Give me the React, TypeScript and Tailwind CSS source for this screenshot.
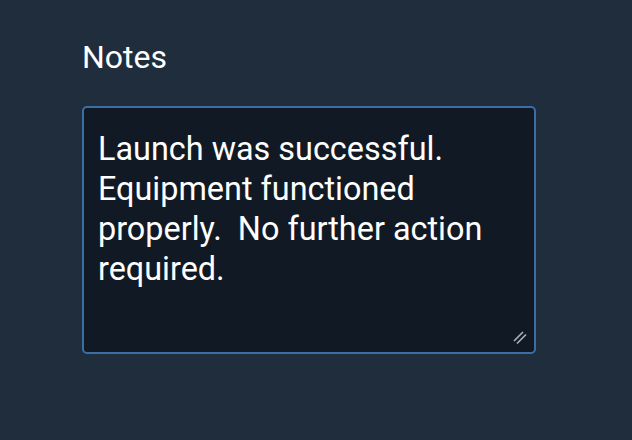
import React from 'react';

export default function App() {
  return (
    <div className="min-h-[440px] w-full bg-[#1f2d3d] pl-[82px] pt-[39px] font-['Roboto','Liberation_Sans',sans-serif]">
      <label htmlFor="notes" className="block text-[32px] leading-[36px] text-white">
        Notes
      </label>
      <div className="relative mt-[31px] w-[454px]">
        <textarea
          id="notes"
          defaultValue={'Launch was successful.  Equipment functioned properly.  No further action required.'}
          className="block h-[248px] w-full resize-none rounded-[5px] border-2 border-[#3b6ea5] bg-[#111a24] px-[14px] pt-[21px] pb-[12px] font-['Roboto','Liberation_Sans',sans-serif] text-[32.4px] leading-[40px] text-white outline-none"
        />
        {/* resize grip */}
        <svg className="pointer-events-none absolute right-[9px] bottom-[10px] h-[14px] w-[14px]" viewBox="0 0 14 14">
          <path d="M1.5 10.5 L9.5 2.5 M4.5 13 L12.5 5" stroke="#aab0b7" strokeWidth="1.7" strokeLinecap="round" />
        </svg>
      </div>
    </div>
  );
}
